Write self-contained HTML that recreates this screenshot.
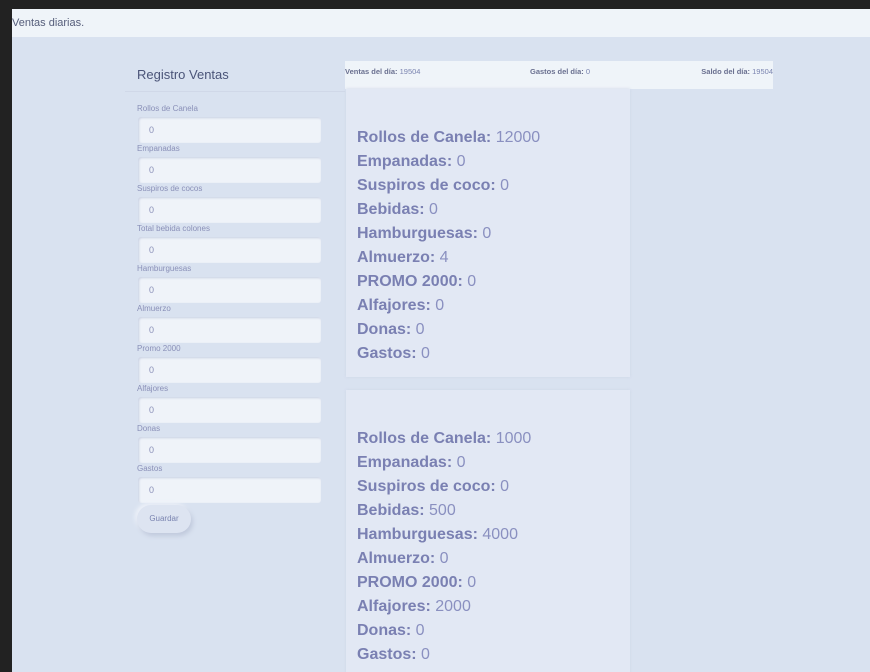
<!DOCTYPE html>
<html style="width:870px;height:672px;overflow:hidden"><head><meta charset="utf-8"><style>
*{box-sizing:border-box;margin:0;padding:0}
body{width:870px;height:672px;overflow:hidden;background:#222;font-family:"Liberation Sans",sans-serif;position:relative}
.hdr{position:absolute;left:12px;top:9px;width:858px;height:28px;background:#eff4f9;font-size:11px;color:#555d7a;line-height:28px}
.main{position:absolute;left:12px;top:37px;width:858px;height:635px;background:#d9e2f0;overflow:hidden}
.title{position:absolute;left:125px;top:30px;font-size:13px;color:#4a5478}
.sep{position:absolute;left:113px;top:54px;width:220px;height:1px;background:#d0d8e8}
.lbl{position:absolute;left:125px;font-size:8px;color:#8a90b8}
.inp{position:absolute;left:126px;width:183px;height:26px;background:#eff3f9;border-radius:3px;box-shadow:inset 1px 1px 2px #c8d0e2;font-size:9px;color:#8a90b8;padding:8px 0 0 11px}
.btn{position:absolute;left:125px;top:468px;width:54px;height:28px;border-radius:14px;background:#dde4f1;box-shadow:2px 3px 5px #c0c9dc,-2px -2px 4px #eef2f9;font-size:8px;color:#7a84b0;text-align:center;line-height:28px}
.bar{position:absolute;left:333px;top:24px;width:428px;height:28px;background:#eff4f9;font-size:7.5px;color:#7a84b0;padding-top:6px}
.bar b{color:#6a7090}
.card{position:absolute;left:334px;width:284px;background:#e2e8f4;box-shadow:0 0 3px #cdd5e6;padding:37px 0 0 11px}
.card div{font-size:16px;color:#8a90c0;height:24px;line-height:24px}
.card b{color:#7a80b2}
</style></head><body>
<div class="hdr">Ventas diarias.</div>
<div class="main">
<div class="title">Registro Ventas</div>
<div class="sep"></div>
<div class="lbl" style="top:67px">Rollos de Canela</div><div class="inp" style="top:80px">0</div>
<div class="lbl" style="top:107px">Empanadas</div><div class="inp" style="top:120px">0</div>
<div class="lbl" style="top:147px">Suspiros de cocos</div><div class="inp" style="top:160px">0</div>
<div class="lbl" style="top:187px">Total bebida colones</div><div class="inp" style="top:200px">0</div>
<div class="lbl" style="top:227px">Hamburguesas</div><div class="inp" style="top:240px">0</div>
<div class="lbl" style="top:267px">Almuerzo</div><div class="inp" style="top:280px">0</div>
<div class="lbl" style="top:307px">Promo 2000</div><div class="inp" style="top:320px">0</div>
<div class="lbl" style="top:347px">Alfajores</div><div class="inp" style="top:360px">0</div>
<div class="lbl" style="top:387px">Donas</div><div class="inp" style="top:400px">0</div>
<div class="lbl" style="top:427px">Gastos</div><div class="inp" style="top:440px">0</div>
<div class="btn">Guardar</div>
<div class="bar"><span style="position:absolute;left:0"><b>Ventas del día:</b> 19504</span><span style="position:absolute;left:185px"><b>Gastos del día:</b> 0</span><span style="position:absolute;right:0"><b>Saldo del día:</b> 19504</span></div>
<div class="card" style="top:52px;height:288px">
<div><b>Rollos de Canela:</b> 12000</div><div><b>Empanadas:</b> 0</div><div><b>Suspiros de coco:</b> 0</div><div><b>Bebidas:</b> 0</div><div><b>Hamburguesas:</b> 0</div><div><b>Almuerzo:</b> 4</div><div><b>PROMO 2000:</b> 0</div><div><b>Alfajores:</b> 0</div><div><b>Donas:</b> 0</div><div><b>Gastos:</b> 0</div>
</div>
<div class="card" style="top:353px;height:300px">
<div><b>Rollos de Canela:</b> 1000</div><div><b>Empanadas:</b> 0</div><div><b>Suspiros de coco:</b> 0</div><div><b>Bebidas:</b> 500</div><div><b>Hamburguesas:</b> 4000</div><div><b>Almuerzo:</b> 0</div><div><b>PROMO 2000:</b> 0</div><div><b>Alfajores:</b> 2000</div><div><b>Donas:</b> 0</div><div><b>Gastos:</b> 0</div>
</div>
</div>
</body></html>
